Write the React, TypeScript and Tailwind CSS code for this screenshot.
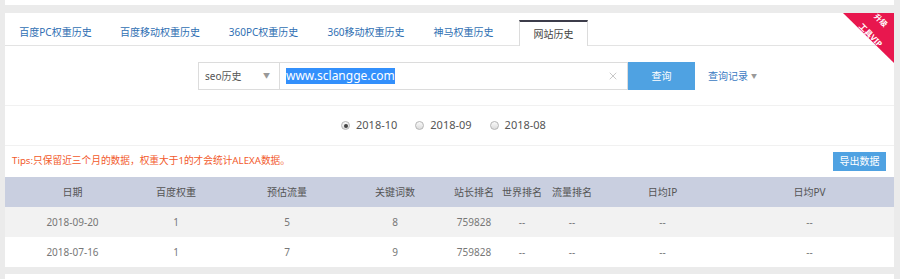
import { X } from 'lucide-react';

const tabs = [
    { label: '百度PC权重历史', w: 'w-[101px]' },
    { label: '百度移动权重历史', w: 'w-[108px]' },
    { label: '360PC权重历史', w: 'w-[99px]' },
    { label: '360移动权重历史', w: 'w-[106px]' },
    { label: '神马权重历史', w: 'w-[89px]' },
];

const cols = [
    'w-[135px]',
    'w-[72px]',
    'w-[150px]',
    'w-[66px]',
    'w-[72px] pl-[20px]',
    'w-[44px]',
    'w-[56px]',
    'w-[125px]',
    'w-[169px]',
];

const headers = ['日期', '百度权重', '预估流量', '关键词数', '站长排名', '世界排名', '流量排名', '日均IP', '日均PV'];

const rows = [
    ['2018-09-20', '1', '5', '8', '759828', '--', '--', '--', '--'],
    ['2018-07-16', '1', '7', '9', '759828', '--', '--', '--', '--'],
];

function Radio({ label, checked }: { label: string; checked?: boolean }) {
    return (
        <label className="flex items-center gap-[6px] text-[11px] text-[#555]">
            <span className="w-[9px] h-[9px] rounded-full border border-[#b5b5b5] bg-gradient-to-b from-[#fafafa] to-[#dcdcdc] flex items-center justify-center">
                {checked && <span className="w-[4px] h-[4px] rounded-full bg-[#444]" />}
            </span>
            {label}
        </label>
    );
}

export default function App() {
    return (
        <div className="w-[900px] h-[279px] bg-[#ebebeb] overflow-hidden font-['Noto_Sans','Noto_Sans_CJK_SC',sans-serif]">
            <div className="ml-[5px] w-[889px] h-[5px] bg-white" />

            <div className="relative mt-[8px] ml-[5px] w-[889px] bg-white overflow-hidden">
                {/* tabs */}
                <div className="h-[33px] flex items-end border-b border-[#e3e3e3]">
                    {tabs.map((t) => (
                        <div key={t.label} className={`${t.w} h-[26px] flex items-center justify-center text-[10px] text-[#2f6fb3]`}>
                            {t.label}
                        </div>
                    ))}
                    <div className="ml-[11px] w-[69px] h-[26px] -mb-px bg-white border-t-2 border-t-[#3c3c4a] border-x border-x-[#dcdcdc] flex items-center justify-center text-[10px] text-[#444]">
                        网站历史
                    </div>
                </div>

                {/* VIP corner */}
                <div className="absolute top-0 right-0 w-[51px] h-[50px] bg-[#e8174e] [clip-path:polygon(0_0,100%_0,100%_100%)]">
                    <span className="absolute left-[30px] top-[4px] rotate-45 text-[7.5px] font-bold text-white leading-none">升级</span>
                    <span className="absolute left-[13px] top-[18px] rotate-45 text-[8px] font-bold text-white leading-none whitespace-nowrap">工具VIP</span>
                </div>

                {/* search */}
                <div className="pt-[16px] pb-[15px] border-b border-[#f1f1f1]">
                    <div className="ml-[193px] flex items-center h-[28px]">
                        <div className="w-[82px] h-full border border-[#dcdcdc] flex items-center justify-between pl-[6px] pr-[9px] text-[10px] text-[#555]">
                            <span>seo历史</span>
                            <span className="text-[7px] text-[#999]">▼</span>
                        </div>
                        <div className="w-[348px] h-full border border-l-0 border-[#dcdcdc] flex items-center justify-between pl-[6px] pr-[8px]">
                            <span className="text-[12px] leading-[16px] bg-[#3390fc] text-white">www.sclangge.com</span>
                            <X size={12} strokeWidth={1.3} className="text-[#aaa]" />
                        </div>
                        <div className="w-[67px] h-full bg-[#4fa2e2] flex items-center justify-center text-[10px] text-white">
                            查询
                        </div>
                        <div className="ml-[13px] flex items-center gap-[3px] text-[10px] text-[#3a7ac2]">
                            查询记录
                            <span className="text-[6px] text-[#999]">▼</span>
                        </div>
                    </div>
                </div>

                {/* months */}
                <div className="h-[40px] flex items-center border-b border-[#f1f1f1]">
                    <div className="ml-[336px] flex items-center gap-[18px]">
                        <Radio label="2018-10" checked />
                        <Radio label="2018-09" />
                        <Radio label="2018-08" />
                    </div>
                </div>

                {/* tips */}
                <div className="h-[31px] flex items-center justify-between pl-[7px] pr-[8px]">
                    <span className="text-[9.7px] text-[#f25a2c]">Tips:只保留近三个月的数据，权重大于1的才会统计ALEXA数据。</span>
                    <span className="w-[53px] h-[19px] bg-[#4fa2e2] text-white text-[10px] flex items-center justify-center">导出数据</span>
                </div>

                {/* table */}
                <div className="flex h-[30px] items-center bg-[#c9cfe0] text-[10px] text-[#555]">
                    {headers.map((h, i) => (
                        <div key={h} className={`${cols[i]} text-center whitespace-nowrap`}>{h}</div>
                    ))}
                </div>
                {rows.map((r, ri) => (
                    <div key={ri} className={`flex h-[30px] items-center text-[10px] text-[#777] ${ri === 0 ? 'bg-[#f2f2f2]' : 'bg-white'}`}>
                        {r.map((c, i) => (
                            <div key={i} className={`${cols[i]} text-center whitespace-nowrap`}>{c}</div>
                        ))}
                    </div>
                ))}
            </div>

            <div className="mt-[7px] ml-[5px] w-[889px] h-[20px] bg-white" />
        </div>
    );
}
